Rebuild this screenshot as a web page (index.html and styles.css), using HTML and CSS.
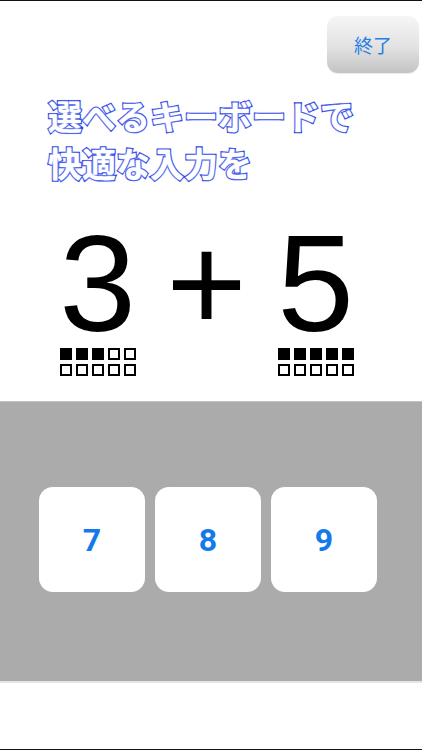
FILE: index.html
```html
<!DOCTYPE html>
<html lang="ja">
<head>
<meta charset="utf-8">
<link rel="stylesheet" href="styles.css">
</head>
<body>
<div class="page">
  <div class="upper">
    <div class="topbar">
      <button class="end-btn">終了</button>
    </div>
    <h1 class="headline">選べるキーボードで<br>快適な入力を</h1>
    <div class="equation">
      <div class="term">
        <div class="digit">3</div>
        <div class="grid">
          <span class="sq on"></span><span class="sq on"></span><span class="sq on"></span><span class="sq"></span><span class="sq"></span>
          <span class="sq"></span><span class="sq"></span><span class="sq"></span><span class="sq"></span><span class="sq"></span>
        </div>
      </div>
      <div class="term">
        <div class="digit">+</div>
      </div>
      <div class="term">
        <div class="digit">5</div>
        <div class="grid">
          <span class="sq on"></span><span class="sq on"></span><span class="sq on"></span><span class="sq on"></span><span class="sq on"></span>
          <span class="sq"></span><span class="sq"></span><span class="sq"></span><span class="sq"></span><span class="sq"></span>
        </div>
      </div>
    </div>
  </div>
  <div class="keyboard">
    <div class="keys">
      <div class="key">7</div>
      <div class="key">8</div>
      <div class="key">9</div>
    </div>
  </div>
  <div class="bottom"></div>
</div>
</body>
</html>
```
FILE: styles.css
```css
html, body {
  margin: 0;
  padding: 0;
  background: #ffffff;
}
.page {
  width: 422px;
  height: 750px;
  box-sizing: border-box;
  border-top: 1px solid #111;
  border-bottom: 1px solid #111;
  display: flex;
  flex-direction: column;
  overflow: hidden;
}
.upper {
  height: 400px;
  flex: none;
}
.topbar {
  display: flex;
  justify-content: flex-end;
  padding-top: 15px;
  padding-right: 3px;
}
.end-btn {
  width: 92px;
  height: 57px;
  border: none;
  border-radius: 11px;
  background: linear-gradient(#f6f6f6, #e2e2e2 55%, #c3c3c3);
  box-shadow: 0 1px 1px rgba(0,0,0,0.08);
  color: #2a7fe3;
  font-family: "Noto Sans CJK JP", sans-serif;
  font-size: 19px;
  padding: 0;
}
.headline {
  margin: 19px 0 0 48px;
  font-family: "Noto Sans CJK JP", sans-serif;
  font-weight: 700;
  font-size: 34px;
  line-height: 47px;
  color: #ffffff;
  -webkit-text-stroke: 2.6px #2436e0;
  paint-order: stroke fill;
  text-shadow: 0 0 3px #a9bcff, 0 0 1px #a9bcff;
  white-space: nowrap;
}
.equation {
  display: flex;
  margin-top: 47px;
  padding-left: 43px;
}
.term {
  width: 109px;
  display: flex;
  flex-direction: column;
  align-items: center;
}
.digit {
  font-family: "Liberation Sans", Arial, sans-serif;
  font-size: 138px;
  line-height: 100px;
  height: 100px;
  color: #000;
}
.grid {
  margin-top: 15px;
  display: grid;
  grid-template-columns: repeat(5, 12px);
  column-gap: 4px;
  row-gap: 4px;
}
.sq {
  width: 12px;
  height: 12px;
  box-sizing: border-box;
  border: 2px solid #000;
  background: #fff;
}
.sq.on {
  background: #000;
}
.keyboard {
  height: 282px;
  flex: none;
  box-sizing: border-box;
  background: #ababab;
  border-top: 1px solid #c4c4c4;
  border-bottom: 2px solid #e6e6e6;
  display: flex;
  align-items: center;
}
.keys {
  display: flex;
  gap: 10px;
  padding-left: 39px;
  margin-top: -4px;
}
.key {
  width: 106px;
  height: 105px;
  border-radius: 14px;
  background: #ffffff;
  display: flex;
  align-items: center;
  justify-content: center;
  font-family: Roboto, "Liberation Sans", sans-serif;
  font-weight: 700;
  font-size: 32px;
  color: #1479ea;
}
.bottom {
  flex: 1;
  background: #fff;
}
```
